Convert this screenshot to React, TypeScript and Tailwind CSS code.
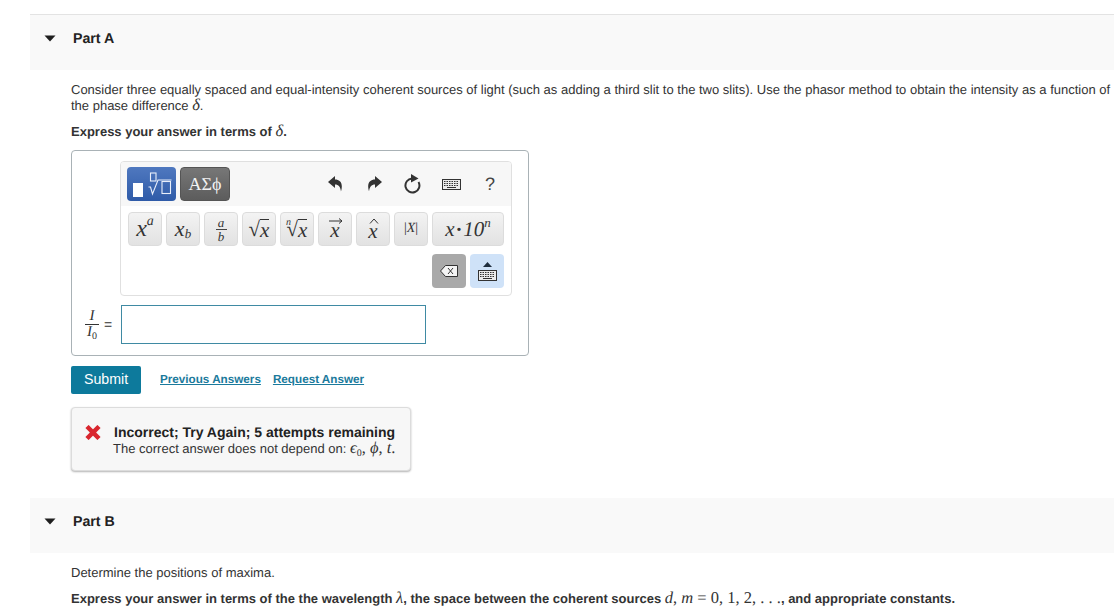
const sans = "[font-family:'Liberation_Sans',Arial,sans-serif]";

const Caret = () => (
  <svg width="12" height="7" viewBox="0 0 12 7" className="-mt-[2px] shrink-0">
    <path d="M0.5 0.5h11L6 6.5z" fill="#1f1f1f" />
  </svg>
);

const Mi = ({ children }: { children: React.ReactNode }) => (
  <span className="font-['Liberation_Serif',serif] text-[16.5px] font-normal italic leading-[0]">{children}</span>
);

const Mn = ({ children }: { children: React.ReactNode }) => (
  <span className="font-['Liberation_Serif',serif] text-[16.5px] font-normal leading-[0]">{children}</span>
);

const KeyboardGlyph = () => (
  <svg width="19" height="11" viewBox="0 0 19 11">
    <rect x="0.5" y="0.5" width="18" height="10" fill="#ececec" stroke="#333" />
    <path d="M2 2.5h15M2 4.5h15M2 6.5h15" stroke="#333" strokeDasharray="1.5 1" />
    <path d="M5 8.5h9" stroke="#333" />
  </svg>
);

const ReplyArrow = ({ flip = false }: { flip?: boolean }) => (
  <svg width="15" height="16" viewBox="0 0 15 16" className={flip ? "-scale-x-100" : ""}>
    <path d="M0 6L7 0v3.5C12 3.5 15.5 7 13 15.5 12.5 11 10.5 8.5 7 8.5V12z" fill="#333" />
  </svg>
);

const Key = ({ children, className = "w-[34px]" }: { children: React.ReactNode; className?: string }) => (
  <div
    className={`flex h-[34px] items-center justify-center rounded-[4px] border border-[#dcdcdc] bg-gradient-to-b from-[#f3f3f3] to-[#e2e2e2] font-['Liberation_Serif',serif] leading-none text-[#333] ${className}`}
  >
    {children}
  </div>
);

const PartHeader = ({ title }: { title: string }) => (
  <div className="flex h-[55px] items-start bg-[#f9f9f9] pl-[14px] pt-[15px]">
    <div className="flex h-[18px] w-[29px] items-center">
      <Caret />
    </div>
    <h2 className="text-[14.2px] font-bold leading-[18px] text-[#222]">{title}</h2>
  </div>
);

const Toolbar = () => (
  <div className="ml-[35px] w-[392px] overflow-hidden rounded-[4px] border border-[#e0e0e0] bg-white">
    <div className="flex h-[44px] items-center bg-[#f7f7f7] pl-[6px]">
      <div className="flex h-[34px] w-[49px] items-center rounded-[4px] bg-gradient-to-b from-[#4f78bf] to-[#2f5ba8] pl-[6px]">
        <div className="mt-[11px] h-[14px] w-[10px] bg-white" />
        <svg width="24" height="24" viewBox="0 0 24 24" fill="none" stroke="#e8eefa" strokeWidth="1.1" className="ml-[5px]">
          <rect x="2.5" y="1" width="5.5" height="8" />
          <path d="M0.5 15h2l2 7 5.5-14h13.5" />
          <rect x="14" y="9.5" width="8.5" height="12" />
        </svg>
      </div>
      <div className="ml-[4px] flex h-[34px] w-[50px] items-center justify-center rounded-[4px] border border-[#555] bg-gradient-to-b from-[#777] to-[#5c5c5c] font-['Liberation_Serif',serif] text-[18px] text-[#f2f2f2]">
        ΑΣϕ
      </div>
      <div className="ml-[98px] flex items-center text-[#333]">
        <ReplyArrow />
        <div className="ml-[24px]">
          <ReplyArrow flip />
        </div>
        <svg width="17" height="22" viewBox="0 0 17 22" fill="none" stroke="#333" strokeWidth="2" className="ml-[22px]">
          <path d="M14.5 9A7 7 0 1 1 8 5.5" />
          <path d="M7 1l7.5 4.5L7 9.5z" fill="#333" stroke="none" />
        </svg>
        <div className="ml-[21px]">
          <KeyboardGlyph />
        </div>
        <span className={`${sans} ml-[24px] text-[18px] leading-none text-[#444]`}>?</span>
      </div>
    </div>
    <div className="flex flex-col gap-[8px] pb-[7px] pl-[7px] pt-[6px]">
      <div className="flex gap-[4px]">
        <Key className="w-[34px] text-[24px] italic">
          x<sup className="text-[14px]">a</sup>
        </Key>
        <Key className="w-[34px] text-[22px] italic">
          x<span className="relative top-[4px] text-[13px]">b</span>
        </Key>
        <Key>
          <span className="flex flex-col items-center text-[13px] italic leading-[13px]">
            <span>a</span>
            <span className="w-[11px] border-t border-[#444]" />
            <span>b</span>
          </span>
        </Key>
        <Key className="w-[34px] text-[21px]">
          √<span className="border-t border-[#333] italic leading-[20px]">x</span>
        </Key>
        <Key className="relative w-[34px] text-[21px]">
          <span className="absolute left-[5px] top-[5px] text-[10px] italic">n</span>√
          <span className="border-t border-[#333] italic leading-[20px]">x</span>
        </Key>
        <Key className="relative w-[34px] text-[21px] italic">
          <svg width="14" height="6" viewBox="0 0 14 6" className="absolute left-[10px] top-[5px]" fill="none" stroke="#333">
            <path d="M0 3h13M10 0.5l3 2.5-3 2.5" />
          </svg>
          <span className="mt-[3px]">x</span>
        </Key>
        <Key className="relative w-[34px] text-[21px] italic">
          <svg width="10" height="6" viewBox="0 0 10 6" className="absolute left-[12px] top-[5px]" fill="none" stroke="#333">
            <path d="M1 5.5L5 1l4 4.5" />
          </svg>
          <span className="mt-[4px]">x</span>
        </Key>
        <Key className={`w-[34px] ${sans} text-[14px]`}>
          |<span className="italic">X</span>|
        </Key>
        <Key className="w-[72px] text-[21px] italic">
          x<span className="relative top-[2px] px-[2px] text-[14px] not-italic">•</span>10<sup className="text-[13px]">n</sup>
        </Key>
      </div>
      <div className="flex gap-[4px] pl-[304px]">
        <div className="flex h-[34px] w-[34px] items-center justify-center rounded-[4px] bg-[#a9a9a9]">
          <svg width="18" height="12" viewBox="0 0 18 12">
            <path d="M0.5 6L5.5 0.5h12v11h-12z" fill="#f4f4f4" stroke="#333" />
            <path d="M8 3l5 6M13 3l-5 6" stroke="#333" fill="none" />
          </svg>
        </div>
        <div className="flex h-[34px] w-[34px] flex-col items-center justify-center gap-[3px] rounded-[4px] bg-[#cfe2f8]">
          <svg width="9" height="5" viewBox="0 0 9 5">
            <path d="M0 5L4.5 0 9 5z" fill="#1f2d3d" />
          </svg>
          <KeyboardGlyph />
        </div>
      </div>
    </div>
  </div>
);

export default function App() {
  return (
    <div className={`h-[616px] w-[1114px] overflow-hidden bg-white pl-[30px] pt-[14px] ${sans} text-[#333] [text-rendering:geometricPrecision]`}>
      <section className="border-t border-[#e3e3e3]">
        <PartHeader title="Part A" />
        <div className="pl-[41px] pt-[12px]">
          <p className="whitespace-nowrap text-[13px] leading-[16px]">
            Consider three equally spaced and equal-intensity coherent sources of light (such as adding a third slit to
            the two slits). Use the phasor method to obtain the intensity as a function of
            <br />
            the phase difference <Mi>δ</Mi>.
          </p>
          <p className="mt-[10px] text-[13px] font-bold leading-[16px]">
            Express your answer in terms of <Mi>δ</Mi>.
          </p>
          <div className="mt-[10px] h-[206px] w-[458px] rounded-[4px] border border-[#a9b2b6] pl-[13px] pt-[10px]">
            <Toolbar />
            <div className="mt-[9px] flex items-center">
              <div className="flex w-[36px] items-center gap-[5px]">
                <span className="flex flex-col items-center font-['Liberation_Serif',serif] text-[15px] italic leading-[15px]">
                  <span>I</span>
                  <span className="w-[14px] border-t border-[#333]" />
                  <span>
                    I<sub className="text-[10px] not-italic">0</sub>
                  </span>
                </span>
                <span className="text-[14px]">=</span>
              </div>
              <div className="h-[39px] w-[305px] border border-[#3f8aa3]" />
            </div>
          </div>
          <div className="mt-[10px] flex items-center">
            <button className="flex h-[28px] w-[70px] items-center justify-center rounded-[2px] bg-[#0d7a9c] text-[14.2px] text-white">
              Submit
            </button>
            <a className="ml-[19px] text-[11.7px] font-bold text-[#1b7a9c] underline">Previous Answers</a>
            <a className="ml-[12px] text-[11.7px] font-bold text-[#1b7a9c] underline">Request Answer</a>
          </div>
          <div className="mt-[13px] flex h-[64px] w-[340px] rounded-[4px] border border-[#dcdcdc] bg-[#f7f7f7] pl-[13px] pt-[16px] shadow-[0_1px_2px_rgba(0,0,0,0.3)]">
            <svg width="16" height="15" viewBox="0 0 16 15" className="mt-[1px] shrink-0">
              <path d="M2 1.5l12 12M14 1.5l-12 12" stroke="#d9262e" strokeWidth="4.5" />
            </svg>
            <div className="ml-[13px] whitespace-nowrap">
              <p className="text-[14px] font-bold leading-[17px] text-[#222]">Incorrect; Try Again; 5 attempts remaining</p>
              <p className="-ml-[1px] text-[13px] leading-[15px]">
                The correct answer does not depend on: <Mi>ϵ</Mi>
                <Mn>
                  <sub className="text-[10px]">0</sub>,{" "}
                </Mn>
                <Mi>ϕ</Mi>
                <Mn>, </Mn>
                <Mi>t</Mi>
                <Mn>.</Mn>
              </p>
            </div>
          </div>
        </div>
      </section>
      <section className="mt-[27px]">
        <PartHeader title="Part B" />
        <div className="pl-[41px] pt-[12px]">
          <p className="text-[13px] leading-[16px]">Determine the positions of maxima.</p>
          <p className="mt-[10px] whitespace-nowrap text-[13px] font-bold leading-[16px]">
            Express your answer in terms of the the wavelength <Mi>λ</Mi>, the space between the coherent sources <Mi>d</Mi>
            <Mn>, </Mn>
            <Mi>m</Mi>
            <Mn> = 0, 1, 2, . . .</Mn>, and appropriate constants.
          </p>
        </div>
      </section>
    </div>
  );
}
